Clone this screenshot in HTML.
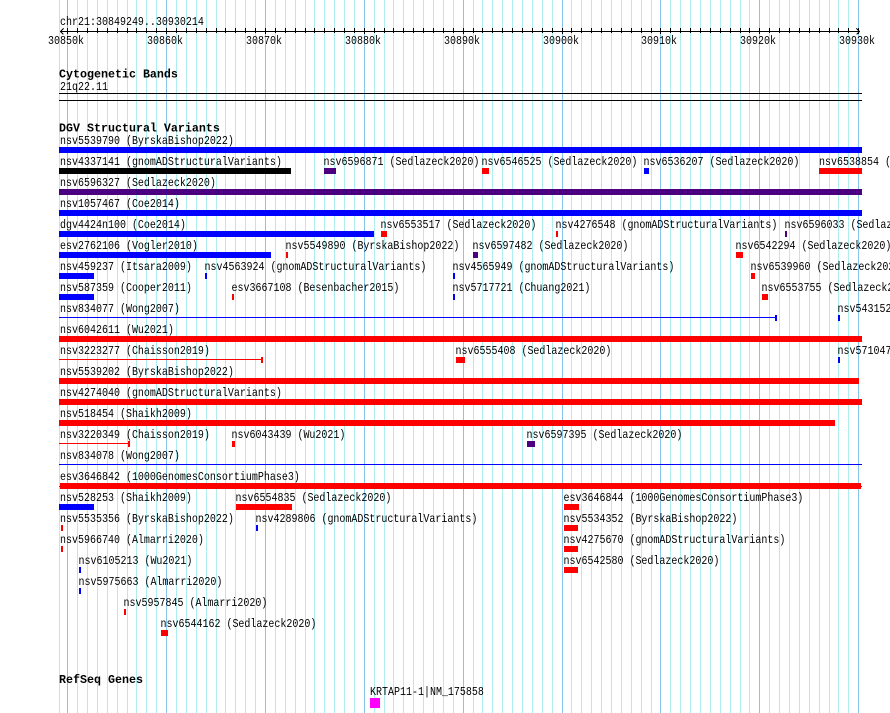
<!DOCTYPE html>
<html>
<head>
<meta charset="utf-8">
<title>chr21:30849249..30930214</title>
<style>
html,body{margin:0;padding:0;background:#fff;width:890px;height:713px;overflow:hidden}
svg{display:block}
text{font-family:"Liberation Mono",monospace;font-size:10px;fill:#000;white-space:pre}
text.b{font-weight:bold;font-size:11.67px}
</style>
</head>
<body>
<svg xmlns="http://www.w3.org/2000/svg" width="890" height="713" viewBox="0 0 890 713" shape-rendering="crispEdges">
<!-- grid -->
<path stroke="#aeeeee" stroke-width="1" fill="none" d="M59.5 0V713M77.5 0V713M87.5 0V713M97.5 0V713M107.5 0V713M117.5 0V713M127.5 0V713M136.5 0V713M146.5 0V713M156.5 0V713M176.5 0V713M186.5 0V713M196.5 0V713M206.5 0V713M216.5 0V713M225.5 0V713M235.5 0V713M245.5 0V713M255.5 0V713M275.5 0V713M285.5 0V713M295.5 0V713M305.5 0V713M314.5 0V713M324.5 0V713M334.5 0V713M344.5 0V713M354.5 0V713M374.5 0V713M384.5 0V713M393.5 0V713M403.5 0V713M413.5 0V713M423.5 0V713M433.5 0V713M443.5 0V713M453.5 0V713M473.5 0V713M482.5 0V713M492.5 0V713M502.5 0V713M512.5 0V713M522.5 0V713M532.5 0V713M542.5 0V713M552.5 0V713M571.5 0V713M581.5 0V713M591.5 0V713M601.5 0V713M611.5 0V713M621.5 0V713M631.5 0V713M641.5 0V713M651.5 0V713M670.5 0V713M680.5 0V713M690.5 0V713M700.5 0V713M710.5 0V713M720.5 0V713M730.5 0V713M740.5 0V713M749.5 0V713M769.5 0V713M779.5 0V713M789.5 0V713M799.5 0V713M809.5 0V713M819.5 0V713M829.5 0V713M838.5 0V713M848.5 0V713"/>
<path stroke="#87c6ec" stroke-width="1" fill="none" d="M67.5 0V713M166.5 0V713M265.5 0V713M364.5 0V713M463.5 0V713M562.5 0V713M660.5 0V713M759.5 0V713M858.5 0V713"/>
<!-- ruler -->
<path stroke="#000" stroke-width="1" fill="none" d="M60 31.5H860M63.5 28.5L60.5 31.5L63.5 34.5M856.5 28.5L859.5 31.5L856.5 34.5"/>
<path stroke="#000" stroke-width="1" fill="none" d="M77.5 28V33M87.5 28V33M97.5 28V33M107.5 28V33M117.5 28V33M127.5 28V33M136.5 28V33M146.5 28V33M156.5 28V33M176.5 28V33M186.5 28V33M196.5 28V33M206.5 28V33M216.5 28V33M225.5 28V33M235.5 28V33M245.5 28V33M255.5 28V33M275.5 28V33M285.5 28V33M295.5 28V33M305.5 28V33M314.5 28V33M324.5 28V33M334.5 28V33M344.5 28V33M354.5 28V33M374.5 28V33M384.5 28V33M393.5 28V33M403.5 28V33M413.5 28V33M423.5 28V33M433.5 28V33M443.5 28V33M453.5 28V33M473.5 28V33M482.5 28V33M492.5 28V33M502.5 28V33M512.5 28V33M522.5 28V33M532.5 28V33M542.5 28V33M552.5 28V33M571.5 28V33M581.5 28V33M591.5 28V33M601.5 28V33M611.5 28V33M621.5 28V33M631.5 28V33M641.5 28V33M651.5 28V33M670.5 28V33M680.5 28V33M690.5 28V33M700.5 28V33M710.5 28V33M720.5 28V33M730.5 28V33M740.5 28V33M749.5 28V33M769.5 28V33M779.5 28V33M789.5 28V33M799.5 28V33M809.5 28V33M819.5 28V33M829.5 28V33M838.5 28V33M848.5 28V33"/>
<path stroke="#000" stroke-width="1" fill="none" d="M67.5 28V34M166.5 28V34M265.5 28V34M364.5 28V34M463.5 28V34M562.5 28V34M660.5 28V34M759.5 28V34M858.5 28V34"/>
<!-- band lines -->
<rect x="59" y="93" width="803" height="1" fill="#000"/>
<rect x="59" y="100" width="803" height="1" fill="#000"/>
<!-- bars -->
<g fill="#0000ff">
<rect x="59" y="147" width="803" height="6"/>
<rect x="644" y="168" width="5" height="6"/>
<rect x="59" y="210" width="803" height="6"/>
<rect x="59" y="231" width="315" height="6"/>
<rect x="59" y="252" width="212" height="6"/>
<rect x="59" y="273" width="35" height="6"/>
<rect x="205" y="273" width="2" height="6"/>
<rect x="453" y="273" width="2" height="6"/>
<rect x="59" y="294" width="35" height="6"/>
<rect x="453" y="294" width="2" height="6"/>
<rect x="59" y="317" width="717" height="1"/>
<rect x="775" y="315" width="2" height="6"/>
<rect x="838" y="315" width="2" height="6"/>
<rect x="838" y="357" width="2" height="6"/>
<rect x="59" y="464" width="803" height="1"/>
<rect x="59" y="504" width="35" height="6"/>
<rect x="256" y="525" width="2" height="6"/>
<rect x="79" y="567" width="2" height="6"/>
<rect x="79" y="588" width="2" height="6"/>
</g>
<rect x="59" y="168" width="232" height="6" fill="#000"/>
<g fill="#4b0082">
<rect x="324" y="168" width="12" height="6"/>
<rect x="59" y="189" width="803" height="6"/>
<rect x="785" y="231" width="2" height="6"/>
<rect x="473" y="252" width="5" height="6"/>
<rect x="527" y="441" width="8" height="6"/>
</g>
<g fill="#ff0000">
<rect x="482" y="168" width="7" height="6"/>
<rect x="819" y="168" width="43" height="6"/>
<rect x="381" y="231" width="6" height="6"/>
<rect x="556" y="231" width="2" height="6"/>
<rect x="286" y="252" width="2" height="6"/>
<rect x="736" y="252" width="7" height="6"/>
<rect x="751" y="273" width="4" height="6"/>
<rect x="232" y="294" width="2" height="6"/>
<rect x="762" y="294" width="6" height="6"/>
<rect x="59" y="336" width="803" height="6"/>
<rect x="59" y="359" width="203" height="1"/>
<rect x="261" y="357" width="2" height="6"/>
<rect x="456" y="357" width="9" height="6"/>
<rect x="59" y="378" width="800" height="6"/>
<rect x="59" y="399" width="803" height="6"/>
<rect x="59" y="420" width="776" height="6"/>
<rect x="59" y="443" width="70" height="1"/>
<rect x="128" y="441" width="2" height="6"/>
<rect x="232" y="441" width="3" height="6"/>
<rect x="60" y="483" width="801" height="6"/>
<rect x="59" y="486" width="803" height="1"/>
<rect x="236" y="504" width="56" height="6"/>
<rect x="564" y="504" width="15" height="6"/>
<rect x="61" y="525" width="2" height="6"/>
<rect x="564" y="525" width="14" height="6"/>
<rect x="61" y="546" width="2" height="6"/>
<rect x="564" y="546" width="14" height="6"/>
<rect x="564" y="567" width="14" height="6"/>
<rect x="124" y="609" width="2" height="6"/>
<rect x="161" y="630" width="7" height="6"/>
</g>
<rect x="370" y="698" width="10" height="10" fill="#ff00ff"/>
<!-- text -->
<g shape-rendering="auto">
<text transform="translate(60 25) scale(1 1.15)">chr21:30849249..30930214</text>
<text transform="translate(48 44) scale(1 1.15)">30850k</text>
<text transform="translate(147 44) scale(1 1.15)">30860k</text>
<text transform="translate(246 44) scale(1 1.15)">30870k</text>
<text transform="translate(345 44) scale(1 1.15)">30880k</text>
<text transform="translate(444 44) scale(1 1.15)">30890k</text>
<text transform="translate(543 44) scale(1 1.15)">30900k</text>
<text transform="translate(641 44) scale(1 1.15)">30910k</text>
<text transform="translate(740 44) scale(1 1.15)">30920k</text>
<text transform="translate(839 44) scale(1 1.15)">30930k</text>
<text class="b" x="59" y="77.5">Cytogenetic Bands</text>
<text transform="translate(60 90) scale(1 1.15)">21q22.11</text>
<text class="b" x="59" y="131.5">DGV Structural Variants</text>
<text class="b" x="59" y="683">RefSeq Genes</text>
<text transform="translate(60 144) scale(1 1.15)">nsv5539790 (ByrskaBishop2022)</text>
<text transform="translate(60 165) scale(1 1.15)">nsv4337141 (gnomADStructuralVariants)</text>
<text transform="translate(323.5 165) scale(1 1.15)">nsv6596871 (Sedlazeck2020)</text>
<text transform="translate(481.5 165) scale(1 1.15)">nsv6546525 (Sedlazeck2020)</text>
<text transform="translate(643.5 165) scale(1 1.15)">nsv6536207 (Sedlazeck2020)</text>
<text transform="translate(819 165) scale(1 1.15)">nsv6538854 (Sedlazeck2020)</text>
<text transform="translate(60 186) scale(1 1.15)">nsv6596327 (Sedlazeck2020)</text>
<text transform="translate(60 207) scale(1 1.15)">nsv1057467 (Coe2014)</text>
<text transform="translate(60 228) scale(1 1.15)">dgv4424n100 (Coe2014)</text>
<text transform="translate(380.5 228) scale(1 1.15)">nsv6553517 (Sedlazeck2020)</text>
<text transform="translate(555.5 228) scale(1 1.15)">nsv4276548 (gnomADStructuralVariants)</text>
<text transform="translate(784.5 228) scale(1 1.15)">nsv6596033 (Sedlazeck2020)</text>
<text transform="translate(60 249) scale(1 1.15)">esv2762106 (Vogler2010)</text>
<text transform="translate(285.5 249) scale(1 1.15)">nsv5549890 (ByrskaBishop2022)</text>
<text transform="translate(472.5 249) scale(1 1.15)">nsv6597482 (Sedlazeck2020)</text>
<text transform="translate(735.5 249) scale(1 1.15)">nsv6542294 (Sedlazeck2020)</text>
<text transform="translate(60 270) scale(1 1.15)">nsv459237 (Itsara2009)</text>
<text transform="translate(204.5 270) scale(1 1.15)">nsv4563924 (gnomADStructuralVariants)</text>
<text transform="translate(452.5 270) scale(1 1.15)">nsv4565949 (gnomADStructuralVariants)</text>
<text transform="translate(750.5 270) scale(1 1.15)">nsv6539960 (Sedlazeck2020)</text>
<text transform="translate(60 291) scale(1 1.15)">nsv587359 (Cooper2011)</text>
<text transform="translate(231.5 291) scale(1 1.15)">esv3667108 (Besenbacher2015)</text>
<text transform="translate(452.5 291) scale(1 1.15)">nsv5717721 (Chuang2021)</text>
<text transform="translate(761.5 291) scale(1 1.15)">nsv6553755 (Sedlazeck2020)</text>
<text transform="translate(60 312) scale(1 1.15)">nsv834077 (Wong2007)</text>
<text transform="translate(837.5 312) scale(1 1.15)">nsv5431526</text>
<text transform="translate(60 333) scale(1 1.15)">nsv6042611 (Wu2021)</text>
<text transform="translate(60 354) scale(1 1.15)">nsv3223277 (Chaisson2019)</text>
<text transform="translate(455.5 354) scale(1 1.15)">nsv6555408 (Sedlazeck2020)</text>
<text transform="translate(837.5 354) scale(1 1.15)">nsv5710475</text>
<text transform="translate(60 375) scale(1 1.15)">nsv5539202 (ByrskaBishop2022)</text>
<text transform="translate(60 396) scale(1 1.15)">nsv4274040 (gnomADStructuralVariants)</text>
<text transform="translate(60 417) scale(1 1.15)">nsv518454 (Shaikh2009)</text>
<text transform="translate(60 438) scale(1 1.15)">nsv3220349 (Chaisson2019)</text>
<text transform="translate(231.5 438) scale(1 1.15)">nsv6043439 (Wu2021)</text>
<text transform="translate(526.5 438) scale(1 1.15)">nsv6597395 (Sedlazeck2020)</text>
<text transform="translate(60 459) scale(1 1.15)">nsv834078 (Wong2007)</text>
<text transform="translate(60 480) scale(1 1.15)">esv3646842 (1000GenomesConsortiumPhase3)</text>
<text transform="translate(60 501) scale(1 1.15)">nsv528253 (Shaikh2009)</text>
<text transform="translate(235.5 501) scale(1 1.15)">nsv6554835 (Sedlazeck2020)</text>
<text transform="translate(563.5 501) scale(1 1.15)">esv3646844 (1000GenomesConsortiumPhase3)</text>
<text transform="translate(60 522) scale(1 1.15)">nsv5535356 (ByrskaBishop2022)</text>
<text transform="translate(255.5 522) scale(1 1.15)">nsv4289806 (gnomADStructuralVariants)</text>
<text transform="translate(563.5 522) scale(1 1.15)">nsv5534352 (ByrskaBishop2022)</text>
<text transform="translate(60 543) scale(1 1.15)">nsv5966740 (Almarri2020)</text>
<text transform="translate(563.5 543) scale(1 1.15)">nsv4275670 (gnomADStructuralVariants)</text>
<text transform="translate(78.5 564) scale(1 1.15)">nsv6105213 (Wu2021)</text>
<text transform="translate(563.5 564) scale(1 1.15)">nsv6542580 (Sedlazeck2020)</text>
<text transform="translate(78.5 585) scale(1 1.15)">nsv5975663 (Almarri2020)</text>
<text transform="translate(123.5 606) scale(1 1.15)">nsv5957845 (Almarri2020)</text>
<text transform="translate(160.5 627) scale(1 1.15)">nsv6544162 (Sedlazeck2020)</text>
<text transform="translate(370 695) scale(1 1.15)">KRTAP11-1|NM_175858</text>
</g>
</svg>
</body>
</html>
